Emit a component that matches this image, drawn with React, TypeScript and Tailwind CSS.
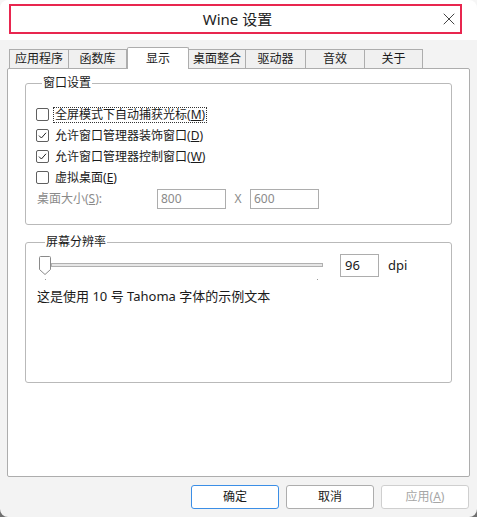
import { X } from 'lucide-react';

const tabs = [
  { label: '应用程序', w: 'w-[60px]' },
  { label: '函数库', w: 'w-[59px]' },
  { label: '显示', w: 'w-[62px]', active: true },
  { label: '桌面整合', w: 'w-[58px]' },
  { label: '驱动器', w: 'w-[61px]' },
  { label: '音效', w: 'w-[60px]' },
  { label: '关于', w: 'w-[59px]' },
];

function Check({ checked }: { checked?: boolean }) {
  return (
    <span className="w-[13px] h-[13px] rounded-[2px] border border-[#5f5f5f] bg-white flex items-center justify-center shrink-0">
      {checked && (
        <svg width="9" height="9" viewBox="0 0 9 9">
          <path d="M1 4.6 L3.4 7 L8 1.8" fill="none" stroke="#222" strokeWidth="1" />
        </svg>
      )}
    </span>
  );
}

function CheckRow({
  checked,
  label,
  hot,
  focused,
}: {
  checked?: boolean;
  label: string;
  hot: string;
  focused?: boolean;
}) {
  return (
    <div className="h-[21px] flex items-center gap-[5px]">
      <Check checked={checked} />
      <span
        className={
          focused
            ? 'outline outline-1 outline-dotted outline-[#333] leading-[14px] px-[1px]'
            : 'leading-[14px] px-[1px]'
        }
      >
        {label}(<span className="underline">{hot}</span>)
      </span>
    </div>
  );
}

export default function App() {
  return (
    <div
      className="w-[477px] h-[517px] bg-gradient-to-b from-[#f6f6f6] to-[#6f6f6f] text-[12px] text-[#1a1a1a]"
      style={{ fontFamily: '"Segoe UI", "Noto Sans", "Noto Sans CJK SC", sans-serif' }}
    >
      <div className="h-full rounded-[8px] bg-[#f3f3f3] overflow-hidden flex flex-col">
        {/* title bar */}
        <div className="h-[40px] bg-white pt-[4px] pl-[9px]">
          <div className="w-[453px] h-[30px] border-2 border-[#e8264f] grid grid-cols-[1fr_auto_1fr] items-center">
            <span />
            <span className="text-[15px] text-[#222] pl-[4px]">Wine 设置</span>
            <span className="flex justify-end pr-[1px]">
              <X className="w-[20px] h-[20px] text-[#333]" strokeWidth={1.1} />
            </span>
          </div>
        </div>

        <div className="px-[7px] pt-[7px]">
          {/* tabs */}
          <div className="flex items-end h-[21px] pl-[2px]">
            {tabs.map((t) =>
              t.active ? (
                <div
                  key={t.label}
                  className={`${t.w} h-[22px] -mb-[1px] relative z-10 bg-white border border-b-0 border-[#adadad] rounded-t-[2px] flex items-start justify-center pt-[2px]`}
                >
                  {t.label}
                </div>
              ) : (
                <div
                  key={t.label}
                  className={`${t.w} h-[19px] bg-[#f0f0f0] border border-b-0 border-[#adadad] -ml-[1px] first:ml-0 flex items-center justify-center`}
                >
                  {t.label}
                </div>
              ),
            )}
          </div>

          {/* panel */}
          <div className="h-[409px] bg-white border border-[#adadad] rounded-[2px] pl-[17px] pr-[17px] pt-[6px]">
            <fieldset className="border border-[#b9b9b9] rounded-[3px] pl-[10px] pr-[10px] pt-[13px] pb-[14px]">
              <legend className="ml-[6px] px-[1px] leading-[16px]">窗口设置</legend>
              <CheckRow label="全屏模式下自动捕获光标" hot="M" focused />
              <CheckRow checked label="允许窗口管理器装饰窗口" hot="D" />
              <CheckRow checked label="允许窗口管理器控制窗口" hot="W" />
              <CheckRow label="虚拟桌面" hot="E" />
              <div className="h-[22px] flex items-center text-[#8a8a8a]">
                <span className="w-[121px] pl-[1px]">
                  桌面大小(<span className="underline">S</span>):
                </span>
                <div className="w-[69px] h-[20px] border border-[#adadad] bg-white px-[3px] flex items-center">
                  800
                </div>
                <span className="w-[24px] text-center">X</span>
                <div className="w-[69px] h-[20px] border border-[#adadad] bg-white px-[3px] flex items-center">
                  600
                </div>
              </div>
            </fieldset>

            <fieldset className="mt-[9px] h-[149px] border border-[#b9b9b9] rounded-[3px] pl-[13px] pt-[4px]">
              <legend className="ml-[6px] px-[1px] leading-[16px]">屏幕分辨率</legend>
              <div className="flex items-center h-[23px]">
                <svg width="284" height="28" viewBox="0 0 284 28" className="mt-[5px] shrink-0">
                  <rect x="12.5" y="9.5" width="271" height="3" fill="#e6e6e6" stroke="#b0b0b0" />
                  <path d="M0.5 3.5 Q0.5 2.5 1.5 2.5 L10.5 2.5 Q11.5 2.5 11.5 3.5 L11.5 15.5 L6 20.5 L0.5 15.5 Z" fill="#fff" stroke="#8a8a8a" />
                  <rect x="6" y="25" width="1" height="1" fill="#9a9a9a" />
                  <rect x="278" y="25" width="1" height="1" fill="#9a9a9a" />
                </svg>
                <div className="ml-[17px] w-[39px] h-[23px] border border-[#adadad] bg-white px-[4px] flex items-center text-[13px]">
                  96
                </div>
                <span className="ml-[9px] text-[13px]">dpi</span>
              </div>
              <div className="mt-[10px] -ml-[2px] text-[13px]">这是使用 10 号 Tahoma 字体的示例文本</div>
            </fieldset>
          </div>

          {/* buttons */}
          <div className="flex justify-end gap-[7px] mt-[8px] pr-[1px]">
            <button className="w-[88px] h-[24px] bg-white border border-[#3b8ee6] rounded-[3px]">确定</button>
            <button className="w-[88px] h-[24px] bg-white border border-[#adadad] rounded-[3px]">取消</button>
            <button className="w-[88px] h-[24px] bg-white border border-[#cfcfcf] rounded-[3px] text-[#a6a6a6]">
              应用(<span className="underline">A</span>)
            </button>
          </div>
        </div>
      </div>
    </div>
  );
}
